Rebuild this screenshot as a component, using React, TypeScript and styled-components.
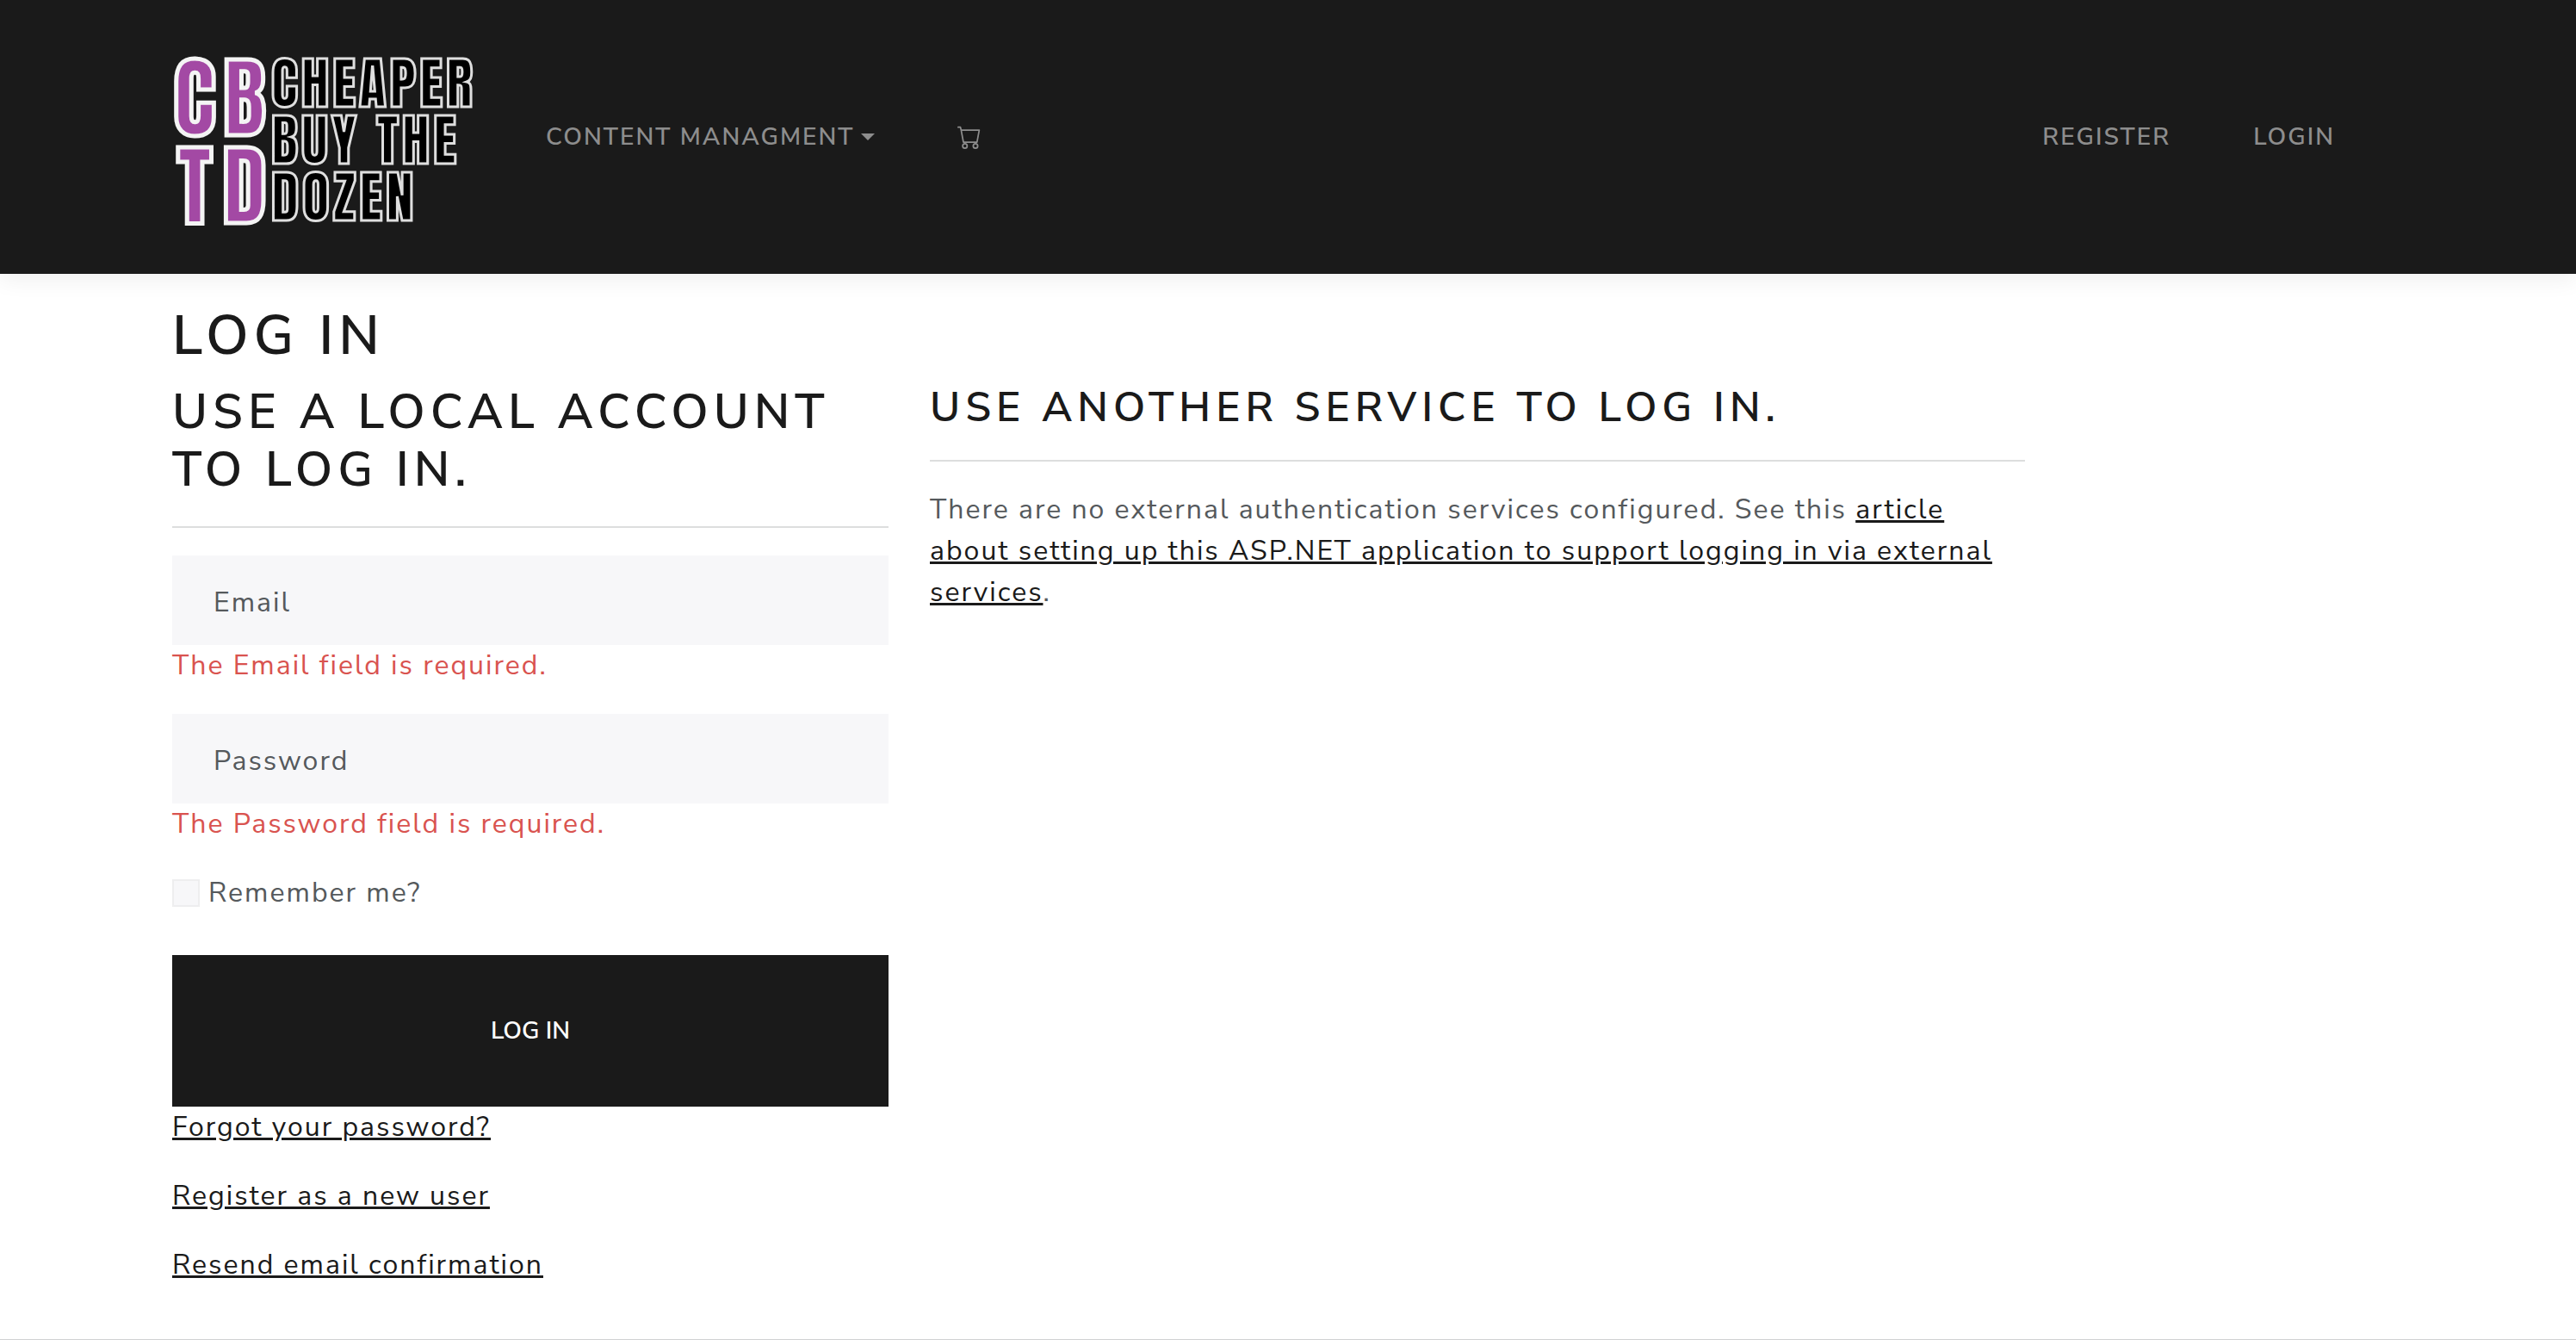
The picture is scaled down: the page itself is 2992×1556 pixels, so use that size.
import React from "react";
import styled, { createGlobalStyle } from "styled-components";
import { BsCart } from "react-icons/bs";

const ink = "#1a1a1a";
const body = "#55595c";
const rule = "#dddede";

const GlobalStyle = createGlobalStyle`
  *, *::before, *::after { box-sizing: border-box; }
  body {
    margin: 0;
    background: #fff;
    color: ${body};
    font-family: "Nunito Sans", Nunito, Lato, sans-serif;
    font-size: 32px;
    font-weight: 400;
    line-height: 1.5;
    letter-spacing: 2px;
  }
`;

const Container = styled.div`
  width: 100%;
  max-width: 2640px;
  margin: 0 auto;
  padding: 0 24px;
`;

const Header = styled.header`
  padding: 58px 0;
  background: ${ink};
  box-shadow: 0 8px 24px rgba(0, 0, 0, 0.06);
`;

const Bar = styled(Container)`
  display: flex;
  align-items: center;
  padding-right: 56px;
`;

const Brand = styled.a`
  display: block;
  margin-right: 32px;
  line-height: 0;
`;

const LogoArt = styled.svg`
  width: 354px;
  height: 202px;
  overflow: visible;
`;

const LogoInitial = styled.text`
  font-family: Anton, "Open Sans Condensed", sans-serif;
  font-size: 103px;
  letter-spacing: 0;
  fill: #a349a4;
  stroke: #f4f4f4;
  stroke-width: 5px;
  text-anchor: middle;
`;

const LogoWord = styled.text`
  font-family: Anton, "Open Sans Condensed", sans-serif;
  font-size: 65px;
  letter-spacing: 4px;
  fill: #000;
  stroke: #dedede;
  stroke-width: 3px;
`;

const Nav = styled.nav`
  flex: 1;
  display: flex;
  justify-content: space-between;
`;

const NavList = styled.ul`
  display: flex;
  margin: 0;
  padding: 0;
  list-style: none;
`;

const navItem = `
  display: flex;
  align-items: center;
  gap: 8px;
  height: 48px;
  padding: 0 48px;
  border: 0;
  background: none;
  color: #8d8d8d;
  font: inherit;
  font-size: 28px;
  font-weight: 600;
  letter-spacing: 2px;
  text-transform: uppercase;
  text-decoration: none;
`;
const NavLink = styled.a`${navItem}`;
const NavButton = styled.button`${navItem}`;

const Caret = styled.span`
  border: 8px solid transparent;
  border-top-color: currentColor;
  border-bottom: 0;
`;

const Main = styled.main`
  padding: 34px 0 30px;
`;

const Title = styled.h1`
  margin: 0 0 16px;
  color: ${ink};
  font-size: 64px;
  font-weight: 600;
  line-height: 1.2;
  letter-spacing: 6px;
  text-transform: uppercase;
`;

const Subtitle = styled.h2<{ $size: number }>`
  margin: 0;
  color: ${ink};
  font-size: ${(p) => p.$size}px;
  font-weight: 600;
  line-height: 1.2;
  letter-spacing: 6px;
  text-transform: uppercase;
`;

const Row = styled.div`
  display: grid;
  grid-template-columns: 4fr 6fr 2fr;
  margin: 0 -24px;
`;

const Column = styled.section`
  padding: 0 24px;
`;

const Rule = styled.hr`
  margin: 32px 0;
  border: 0;
  border-top: 2px solid ${rule};
`;

const Field = styled.div`
  position: relative;
  margin-bottom: 32px;
`;

const FieldInput = styled.input`
  display: block;
  width: 100%;
  height: 104px;
  padding: 32px 48px 24px;
  border: 0;
  border-radius: 0;
  background: #f7f7f9;
  color: ${body};
  font: inherit;
  letter-spacing: inherit;
`;

const FieldLabel = styled.label`
  position: absolute;
  top: 31px;
  left: 48px;
`;

const FieldError = styled.span`
  display: block;
  color: #d9534f;
`;

const Remember = styled.label`
  display: flex;
  align-items: center;
  gap: 10px;
  margin-bottom: 48px;
`;

const Checkbox = styled.input`
  appearance: none;
  width: 32px;
  height: 32px;
  margin: 0;
  border: 2px solid #eeeeef;
  background: #f7f7f9;
`;

const Submit = styled.button`
  display: block;
  width: 100%;
  height: 176px;
  border: 0;
  background: ${ink};
  color: #fff;
  font: inherit;
  font-size: 28px;
  font-weight: 600;
  text-transform: uppercase;
`;

const Paragraph = styled.p`
  margin: 0 0 32px;
`;

const TextLink = styled.a`
  color: ${ink};
`;

const Footer = styled.footer`
  border-top: 2px solid #d0d1d3;
`;

const Logo = () => (
  <LogoArt viewBox="0 0 354 202" role="img" aria-label="Cheaper Buy The Dozen">
    <LogoInitial x="26" y="99">C</LogoInitial>
    <LogoInitial x="84" y="99">B</LogoInitial>
    <LogoInitial x="26" y="201">T</LogoInitial>
    <LogoInitial x="84" y="201">D</LogoInitial>
    <LogoWord x="115" y="66">CHEAPER</LogoWord>
    <LogoWord x="115" y="132">BUY THE</LogoWord>
    <LogoWord x="115" y="198">DOZEN</LogoWord>
  </LogoArt>
);

const fields = [
  { id: "email", label: "Email", type: "email", error: "The Email field is required." },
  { id: "password", label: "Password", type: "password", error: "The Password field is required." },
];

const accountLinks = ["Forgot your password?", "Register as a new user", "Resend email confirmation"];

export default function App() {
  return (
    <>
      <GlobalStyle />
      <Header>
        <Bar>
          <Brand href="#"><Logo /></Brand>
          <Nav>
            <NavList>
              <li><NavButton type="button">Content Managment<Caret /></NavButton></li>
              <li><NavLink href="#" aria-label="Cart"><BsCart size={28} /></NavLink></li>
            </NavList>
            <NavList>
              <li><NavLink href="#">Register</NavLink></li>
              <li><NavLink href="#">Login</NavLink></li>
            </NavList>
          </Nav>
        </Bar>
      </Header>
      <Main>
        <Container>
          <Title>Log in</Title>
          <Row>
            <Column>
              <form onSubmit={(e) => e.preventDefault()}>
                <Subtitle $size={56}>Use a local account to log in.</Subtitle>
                <Rule />
                {fields.map((f) => (
                  <Field key={f.id}>
                    <FieldInput id={f.id} type={f.type} />
                    <FieldLabel htmlFor={f.id}>{f.label}</FieldLabel>
                    <FieldError>{f.error}</FieldError>
                  </Field>
                ))}
                <Remember><Checkbox type="checkbox" />Remember me?</Remember>
                <Submit type="submit">Log in</Submit>
                {accountLinks.map((text) => (
                  <Paragraph key={text}><TextLink href="#">{text}</TextLink></Paragraph>
                ))}
              </form>
            </Column>
            <Column>
              <Subtitle as="h3" $size={48}>Use another service to log in.</Subtitle>
              <Rule />
              <Paragraph>
                There are no external authentication services configured. See this{" "}
                <TextLink href="#">article about setting up this ASP.NET application to support logging in via external services</TextLink>.
              </Paragraph>
            </Column>
          </Row>
        </Container>
      </Main>
      <Footer />
    </>
  );
}
